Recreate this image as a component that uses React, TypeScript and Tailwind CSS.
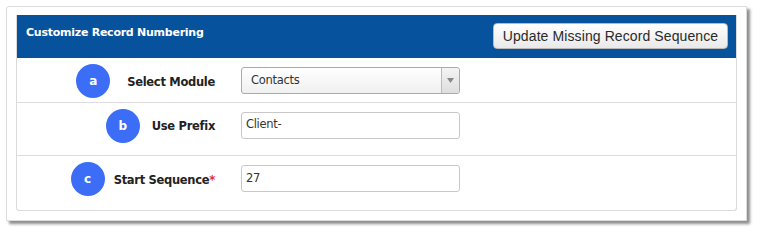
import React from 'react';

const rows = [
  { key: 'a', label: 'Select Module', gap: 'gap-[17px]', h: 'h-[45px]', kind: 'select', value: 'Contacts' },
  { key: 'b', label: 'Use Prefix', gap: 'gap-[12px]', h: 'h-[54px]', kind: 'input', value: 'Client-' },
  { key: 'c', label: 'Start Sequence', gap: 'gap-[9px]', h: 'h-[54px]', kind: 'input', value: '27', required: true },
];

function Badge({ letter }: { letter: string }) {
  return (
    <div className="w-[34px] h-[34px] rounded-full bg-[#3b6df6] text-white flex items-center justify-center text-[12px] font-bold font-['DejaVu_Sans',sans-serif]">
      {letter}
    </div>
  );
}

export default function App() {
  return (
    <div className="w-[760px] h-[234px] bg-white pt-[6px] pl-[6px]">
      <div className="w-[741px] h-[215px] bg-white border border-[#dcdcdc] rounded-tl-[3px] shadow-[3px_3px_3px_rgba(0,0,0,0.45)] pt-[8px] pl-[9px]">
        <div className="w-[721px] h-[196px] border border-[#dadada] border-t-0 rounded-b-[3px] flex flex-col">
          {/* header */}
          <div className="h-[43px] bg-[#07529d] flex items-start justify-between pl-[9px] pr-[8px]">
            <div className="pt-[10px] text-white font-bold text-[11px] tracking-[-0.25px] font-['DejaVu_Sans',sans-serif]">
              Customize Record Numbering
            </div>
            <button className="mt-[8px] w-[235px] h-[26px] rounded-[4px] border border-[#b9b9b9] bg-gradient-to-b from-white to-[#e9e9e9] text-[#2a2a2a] text-[14px] font-['Liberation_Sans',Arial,sans-serif] tracking-[0.1px]">
              Update Missing Record Sequence
            </button>
          </div>

          {rows.map((r, i) => (
            <div
              key={r.key}
              className={`${r.h} flex items-start pt-[9px] ${i < rows.length - 1 ? 'border-b border-[#dddddd]' : ''}`}
            >
              <div className={`w-[198px] flex items-center justify-end ${r.gap} h-[34px] -mt-[3px]`}>
                <Badge letter={r.key} />
                <div className="text-[11.5px] font-bold text-[#222] tracking-[-0.3px] font-['DejaVu_Sans',sans-serif] mt-[3px]">
                  {r.label}
                  {r.required && <span className="text-[#e03030]">*</span>}
                </div>
              </div>
              <div className="ml-[26px]">
                {r.kind === 'select' ? (
                  <div className="w-[219px] h-[27px] border border-[#aaaaaa] rounded-[3px] bg-gradient-to-b from-white to-[#f0f0f0] flex items-stretch">
                    <div className="flex-1 flex items-center pl-[9px] text-[11.5px] text-[#333] font-['DejaVu_Sans',sans-serif] tracking-[-0.3px]">
                      {r.value}
                    </div>
                    <div className="w-[18px] border-l border-[#bbbbbb] bg-gradient-to-b from-[#f4f4f4] to-[#dedede] rounded-r-[3px] flex items-center justify-center">
                      <svg width="7" height="5" viewBox="0 0 7 5">
                        <path d="M0 0 L7 0 L3.5 5 Z" fill="#888" />
                      </svg>
                    </div>
                  </div>
                ) : (
                  <div className="w-[219px] h-[27px] border border-[#c8c8c8] rounded-[3px] bg-white flex items-center pl-[4px] text-[11.5px] text-[#333] font-['DejaVu_Sans',sans-serif] tracking-[-0.3px]">
                    {r.value}
                  </div>
                )}
              </div>
            </div>
          ))}
        </div>
      </div>
    </div>
  );
}
